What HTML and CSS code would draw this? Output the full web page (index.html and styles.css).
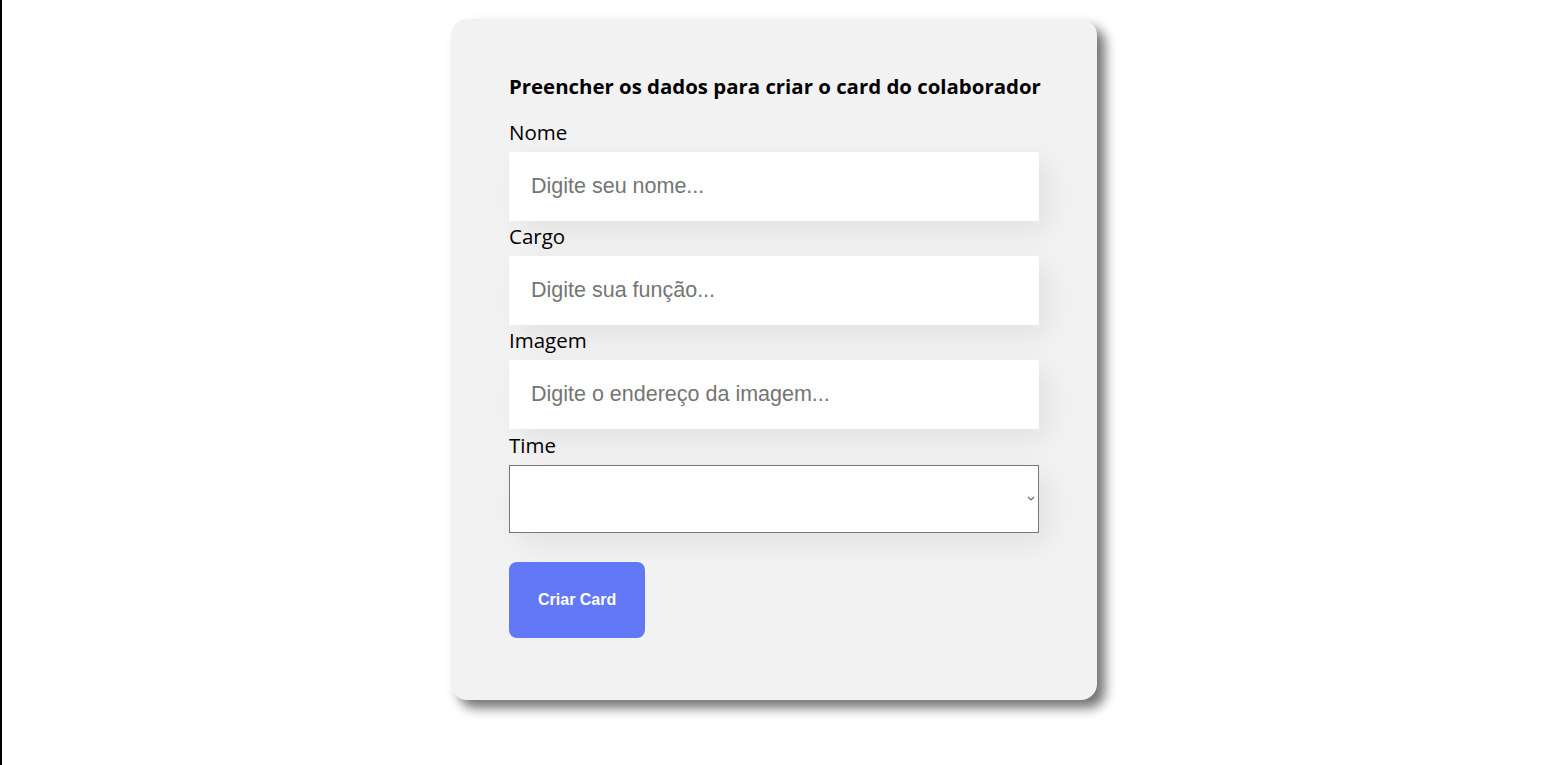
FILE: index.html
```html
<!DOCTYPE html>
<html lang="pt-BR">
<head>
    <meta charset="UTF-8" />
    <meta name="viewport" content="width=device-width, initial-scale=1" />
    <title>Organo - Formulário</title>
    <link rel="stylesheet" href="styles.css">
</head>
<body>
    <section class="formulario">
        <form>
            <h2>Preencher os dados para criar o card do colaborador</h2>
            <div class="campo-texto">
                <label>Nome</label>
                <input type="text" placeholder="Digite seu nome..." />
            </div>
            <div class="campo-texto">
                <label>Cargo</label>
                <input type="text" placeholder="Digite sua função..." />
            </div>
            <div class="campo-texto">
                <label>Imagem</label>
                <input type="text" placeholder="Digite o endereço da imagem..." />
            </div>
            <div class="lista-suspensa">
                <label>Time</label>
                <div class="select-wrap">
                    <select></select>
                    <svg class="seta" width="8" height="5" viewBox="0 0 8 5">
                        <path d="M1 1 L4 4 L7 1" fill="none" stroke="#6d6d6d" stroke-width="1.2" />
                    </svg>
                </div>
            </div>
            <button type="submit" class="botao">Criar Card</button>
        </form>
    </section>
</body>
</html>
```

FILE: styles.css
```css
* {
    box-sizing: border-box;
}
body {
    margin: 0;
    min-height: 100vh;
    border-left: 2px solid #000; /* linha escura na borda */
    background-color: #fff;
    font-family: "Segoe UI", "Open Sans", "Noto Sans", sans-serif;
}
.formulario {
    display: flex;
    justify-content: center;
    padding-top: 19px;
}
.formulario form {
    width: 646px;
    background-color: #f2f2f2;
    border-radius: 16px;
    padding: 52px 58px 62px;
    box-shadow: 8px 8px 12px rgba(0, 0, 0, 0.55);
}
.formulario h2 {
    font-size: 20.4px;
    font-weight: 700;
    margin: 0 0 18px;
    line-height: 30px;
    white-space: nowrap;
    color: #000;
}
.campo-texto,
.lista-suspensa {
    display: flex;
    flex-direction: column;
}
.campo-texto label,
.lista-suspensa label {
    font-size: 20.5px;
    line-height: 27px;
    margin: 2px 0 6px;
    color: #000;
}
.campo-texto:first-of-type label {
    margin-top: 0;
}
.lista-suspensa label {
    margin-top: 3px;
}
.campo-texto input {
    height: 69px;
    border: none;
    background-color: #fff;
    padding: 0 22px;
    font-family: "Liberation Sans", Arial, sans-serif;
    font-size: 21.5px;
    box-shadow: 10px 10px 30px rgba(0, 0, 0, 0.07);
    outline: none;
}
.campo-texto input::placeholder {
    color: #757575;
}
.select-wrap {
    position: relative;
}
.lista-suspensa select {
    width: 100%;
    height: 68px;
    appearance: none;
    border: 1px solid #767676;
    border-radius: 0;
    background-color: #fff;
    box-shadow: 10px 10px 30px rgba(0, 0, 0, 0.07);
}
.seta {
    position: absolute;
    right: 4px;
    top: 31px;
}
.botao {
    margin-top: 29px;
    background-color: #6278f7;
    color: #fff;
    border: none;
    border-radius: 8px;
    padding: 29px;
    font-family: "Liberation Sans", Arial, sans-serif;
    font-weight: 700;
    font-size: 16px;
    line-height: 18px;
    height: 76px;
    cursor: pointer;
}
```
